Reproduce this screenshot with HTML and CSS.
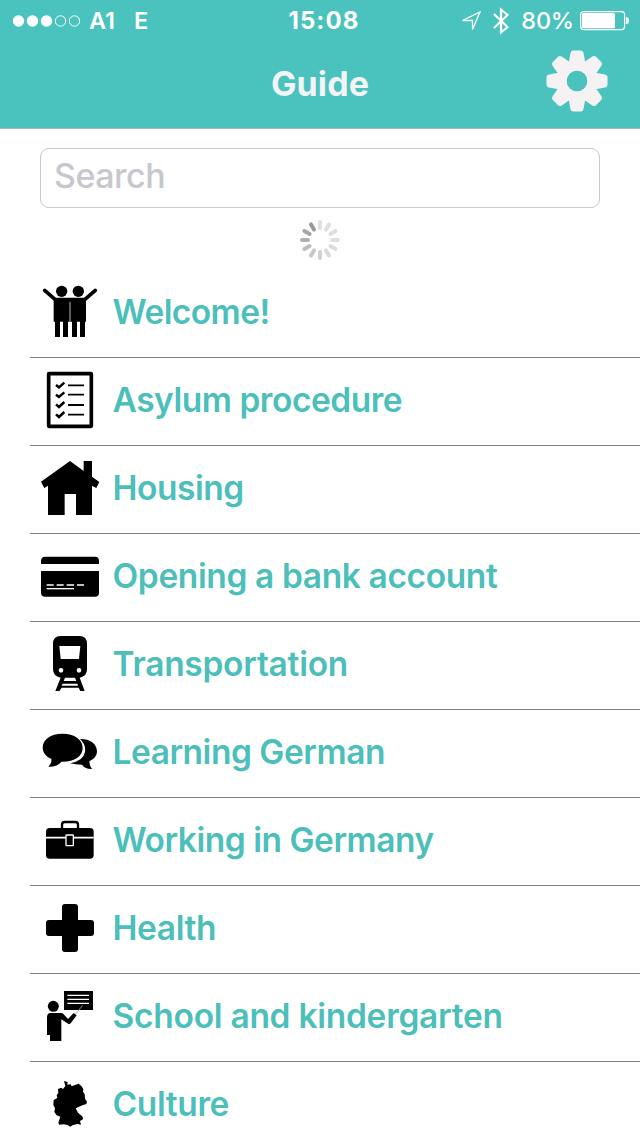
FILE: index.html
```html
<!DOCTYPE html>
<html lang="en">
<head>
<meta charset="utf-8">
<title>Guide</title>
<link rel="stylesheet" href="styles.css">
</head>
<body>
<header class="header">
  <div class="status">
    <div class="status-left">
      <svg class="signal" viewBox="0 0 68 12"><g fill="#fff"><circle cx="6.500" cy="6" r="5.700"/><circle cx="20.500" cy="6" r="5.700"/><circle cx="34.500" cy="6" r="5.700"/></g><g fill="none" stroke="#fff"><circle cx="48.500" cy="6" r="5.200"/><circle cx="62.500" cy="6" r="5.200"/></g></svg>
      <span class="carrier">A1</span><span class="network">E</span>
    </div>
    <span class="time">15:08</span>
    <div class="status-right">
      <svg class="location" viewBox="0 0 20 20"><path d="M1.5 9.5 19 1 11.5 18.5V9.5Z" fill="none" stroke="#fff" stroke-width="1.300"/></svg>
      <svg class="bluetooth" viewBox="0 0 16 28"><path d="M1 7 14.5 20 8 25.5V2.5L14.5 8 1 21" fill="none" stroke="#fff" stroke-width="2.200"/></svg>
      <span class="percent">80%</span>
      <svg class="battery" viewBox="0 0 49 20"><rect x=".6" y=".6" width="44" height="18" rx="3" fill="none" stroke="#fff" stroke-width="1.2"/><rect x="2" y="2" width="33" height="15.3" rx="1.5" fill="#fff"/><path d="M46 6q3 0 3 3.500t-3 3.500Z" fill="#fff"/></svg>
    </div>
  </div>
  <div class="navbar">
    <h1 class="title">Guide</h1>
    <svg class="gear" viewBox="-31 -31 62 62">
      <defs><path id="tooth" d="M-8.500-17-6.500-28Q-6-30.500-4-30.500H4Q6-30.500 6.500-28L8.500-17Z"/></defs>
      <g fill="#f5f2f3"><use href="#tooth"/><use href="#tooth" transform="rotate(45)"/><use href="#tooth" transform="rotate(90)"/><use href="#tooth" transform="rotate(135)"/><use href="#tooth" transform="rotate(180)"/><use href="#tooth" transform="rotate(225)"/><use href="#tooth" transform="rotate(270)"/><use href="#tooth" transform="rotate(315)"/></g>
      <circle r="15" fill="none" stroke="#f5f2f3" stroke-width="10"/><circle r="10.300" fill="#4ac2be"/>
    </svg>
  </div>
</header>
<main>
  <div class="search"><span class="placeholder">Search</span></div>
  <svg class="spinner" viewBox="-20 -20 40 40" stroke-width="4" stroke-linecap="round">
    <path d="M0-12V-18" stroke="#e0e0e0"/><path d="M0-12V-18" stroke="#dfdfdf" transform="rotate(30)"/><path d="M0-12V-18" stroke="#dfdfdf" transform="rotate(60)"/><path d="M0-12V-18" stroke="#dfdfdf" transform="rotate(90)"/><path d="M0-12V-18" stroke="#dedede" transform="rotate(120)"/><path d="M0-12V-18" stroke="#dadada" transform="rotate(150)"/><path d="M0-12V-18" stroke="#d0d0d0" transform="rotate(180)"/><path d="M0-12V-18" stroke="#c7c7c7" transform="rotate(210)"/><path d="M0-12V-18" stroke="#bcbcbc" transform="rotate(240)"/><path d="M0-12V-18" stroke="#b0b0b0" transform="rotate(270)"/><path d="M0-12V-18" stroke="#a5a5a5" transform="rotate(300)"/><path d="M0-12V-18" stroke="#999" transform="rotate(330)"/>
  </svg>
  <ul class="topics">
    <li class="topic">
      <svg class="icon" viewBox="30 21 180 180"><circle cx="95" cy="49" r="17"/><circle cx="145" cy="49" r="17"/><path d="M44 46 76 74H164L196 46" fill="none" stroke="#000" stroke-width="11" stroke-linecap="round"/><path d="M71 69H168V140H165V186H150V140H141V186H126V140H114V186H99V140H90V186H75V140H71Z"/><path d="M120 81V140" stroke="#bbb" stroke-width="3"/></svg>
      <span class="label tight">Welcome!</span>
    </li>
    <li class="topic">
      <svg class="icon" viewBox="30 30 180 180" fill="none" stroke="#000"><rect x="56" y="41" width="128" height="158" rx="1" stroke-width="11"/><path d="M78 75 87 82 103 68M78 104 87 111 103 97M78 133 87 141 103 126M78 163 87 171 103 156" stroke-width="7.500"/><path d="M114 76H162M114 104H162M114 135H162M114 164H162" stroke-width="5.500"/></svg>
      <span class="label">Asylum procedure</span>
    </li>
    <li class="topic">
      <svg class="icon" viewBox="30 24 180 180"><path d="M33 95 120 33 161 63V33H186V80L208 96 199 114 186 107V195H138V132H104V195H54V107L43 114Z"/></svg>
      <span class="label">Housing</span>
    </li>
    <li class="topic">
      <svg class="icon" viewBox="30 288 180 180"><path d="M33 342V333Q33 320 46 320H195Q207 320 207 333V342ZM33 363H207V428Q207 440 195 440H46Q33 440 33 428Z"/><path d="M50 405H71M80 405H101M110 405H132M141 405H162" stroke="#fff" stroke-width="5"/><path d="M50 416H132" stroke="#fff" stroke-width="4"/></svg>
      <span class="label open">Opening a bank account</span>
    </li>
    <li class="topic">
      <svg class="icon" viewBox="30 27 180 180"><path fill-rule="evenodd" d="M92 33H148Q171 33 171 57V133Q171 154 149 158L164 198H151L146 188H95L88 198H76L92 158Q69 154 69 133V57Q69 33 92 33ZM88 63 92 102H147L151 63ZM105 158 101 168H139L135 158ZM98 176 95 182H144L142 176ZM86 136a7 7 0 1 0 14 0a7 7 0 1 0-14 0M140 136a7 7 0 1 0 14 0a7 7 0 1 0-14 0"/></svg>
      <span class="label wide">Transportation</span>
    </li>
    <li class="topic">
      <svg class="icon" viewBox="30 6 180 180"><path d="M150 57C183 56 201 73 201 95Q201 112 178 124Q178 136 186 147Q166 148 156 134Q136 134 120 130Q160 123 165 96Q168 73 150 57Z"/><path d="M97 41C134 41 158 59 158 84S133 126 94 125Q83 141 55 140Q66 130 64 117Q38 105 38 83C38 58 62 41 97 41Z"/></svg>
      <span class="label">Learning German</span>
    </li>
    <li class="topic">
      <svg class="icon" viewBox="30 15 180 180"><path d="M96 70V59Q96 51 104 51H136Q144 51 144 59V70" fill="none" stroke="#000" stroke-width="7"/><rect x="48" y="69" width="143" height="92" rx="11"/><path d="M48 98H191" stroke="#fff" stroke-width="5"/><rect x="108" y="90" width="22" height="32" rx="2" stroke="#fff" stroke-width="4"/></svg>
      <span class="label">Working in Germany</span>
    </li>
    <li class="topic">
      <svg class="icon" viewBox="40 898 60 60"><path d="M65 904H75Q78 904 78 907V920H91Q94 920 94 923V933Q94 936 91 936H78V949Q78 952 75 952H65Q62 952 62 949V936H49Q46 936 46 933V923Q46 920 49 920H62V907Q62 904 65 904Z"/></svg>
      <span class="label open">Health</span>
    </li>
    <li class="topic">
      <svg class="icon" viewBox="30 18 180 180"><path d="M102 33H189V90H102Z"/><path d="M112 46H177M112 58H177M112 70H177" stroke="#fff" stroke-width="3.500"/><path d="M136 103 158 76" stroke="#aaa" stroke-width="2.500"/><circle cx="70" cy="79" r="16.500"/><path d="M62 99H94Q99 99 103 105L114 117 131 99 140 106 122 130Q117 135 112 130L94 118V183H60V165H51V112Q51 99 62 99Z"/></svg>
      <span class="label wide">School and kindergarten</span>
    </li>
    <li class="topic">
      <svg class="icon" viewBox="30 12 180 180"><path d="M102 33 113 36 112 44 122 43 125 49 133 46 146 41 154 48 160 57 159 65 164 73 165 86 171 95 169 102 157 106 144 112 137 115 144 128 158 140 159 148 150 153 153 164 143 162 129 165 121 170 113 165 101 163 88 164 85 158 91 140 80 136 73 126 75 115 70 105 71 90 82 84 80 76 85 68 84 57 93 53 99 57 106 48Z"/></svg>
      <span class="label open">Culture</span>
    </li>
  </ul>
</main>
</body>
</html>
```
FILE: styles.css
```css
* { box-sizing: border-box; }
body {
  margin: 0;
  width: 640px;
  height: 1136px;
  overflow: hidden;
  background: #fff;
  font-family: Inter, "Liberation Sans", sans-serif;
}
svg { display: block; flex: none; }
.header {
  height: 129px;
  background: #4ac2be;
  border-bottom: 1px solid #a9b8b8;
  color: #fff;
}
.status {
  display: grid;
  grid-template-columns: 1fr auto 1fr;
  align-items: center;
  height: 40px;
  padding: 1px 11px 0 12px;
  font-size: 24px;
  font-weight: 600;
  line-height: 40px;
}
.status-left, .status-right { display: flex; align-items: center; }
.status-right { justify-content: flex-end; }
.signal { width: 68px; height: 12px; }
.carrier { margin-left: 9px; font-size: 23.5px; }
.network { margin-left: 19px; font-size: 23.5px; }
.time { font-weight: 700; letter-spacing: 1.1px; padding-left: 7px; }
.location { width: 20px; height: 20px; }
.bluetooth { width: 16px; height: 28px; margin-left: 12px; }
.percent { margin-left: 12px; font-size: 23.5px; font-weight: 500; letter-spacing: -.2px; }
.battery { width: 49px; height: 20px; margin-left: 6px; }
.navbar {
  display: grid;
  grid-template-columns: 1fr auto 1fr;
  height: 88px;
  padding: 0 32px;
}
.title {
  grid-column: 2;
  margin: 0;
  font-size: 34px;
  font-weight: 700;
  line-height: 88px;
  letter-spacing: .1px;
  color: #f4f4f6;
}
.gear { width: 62px; height: 62px; justify-self: end; margin-top: 9.5px; }
.search {
  height: 60px;
  margin: 19px 40px 0;
  padding-left: 13px;
  border: 1px solid #c9c9cd;
  border-radius: 9px;
}
.placeholder {
  color: #c7c7cd;
  font-size: 34px;
  font-weight: 500;
  letter-spacing: -.5px;
  line-height: 54px;
}
.spinner { width: 40px; height: 40px; margin: 12px auto 10px; }
.topics { list-style: none; margin: 0; padding: 0 0 0 30px; }
.topic {
  display: flex;
  align-items: center;
  gap: 12.5px;
  height: 88px;
  padding: 0 0 4px 10px;
  border-bottom: 1px solid #7f7f7f;
}
.icon { width: 60px; height: 60px; }
.label {
  color: #4dbfba;
  font-size: 33.5px;
  font-weight: 600;
  letter-spacing: -.47px;
  white-space: nowrap;
}
.label.tight { letter-spacing: -.57px; }
.label.open { letter-spacing: -.38px; }
.label.wide { letter-spacing: -.27px; }
```
